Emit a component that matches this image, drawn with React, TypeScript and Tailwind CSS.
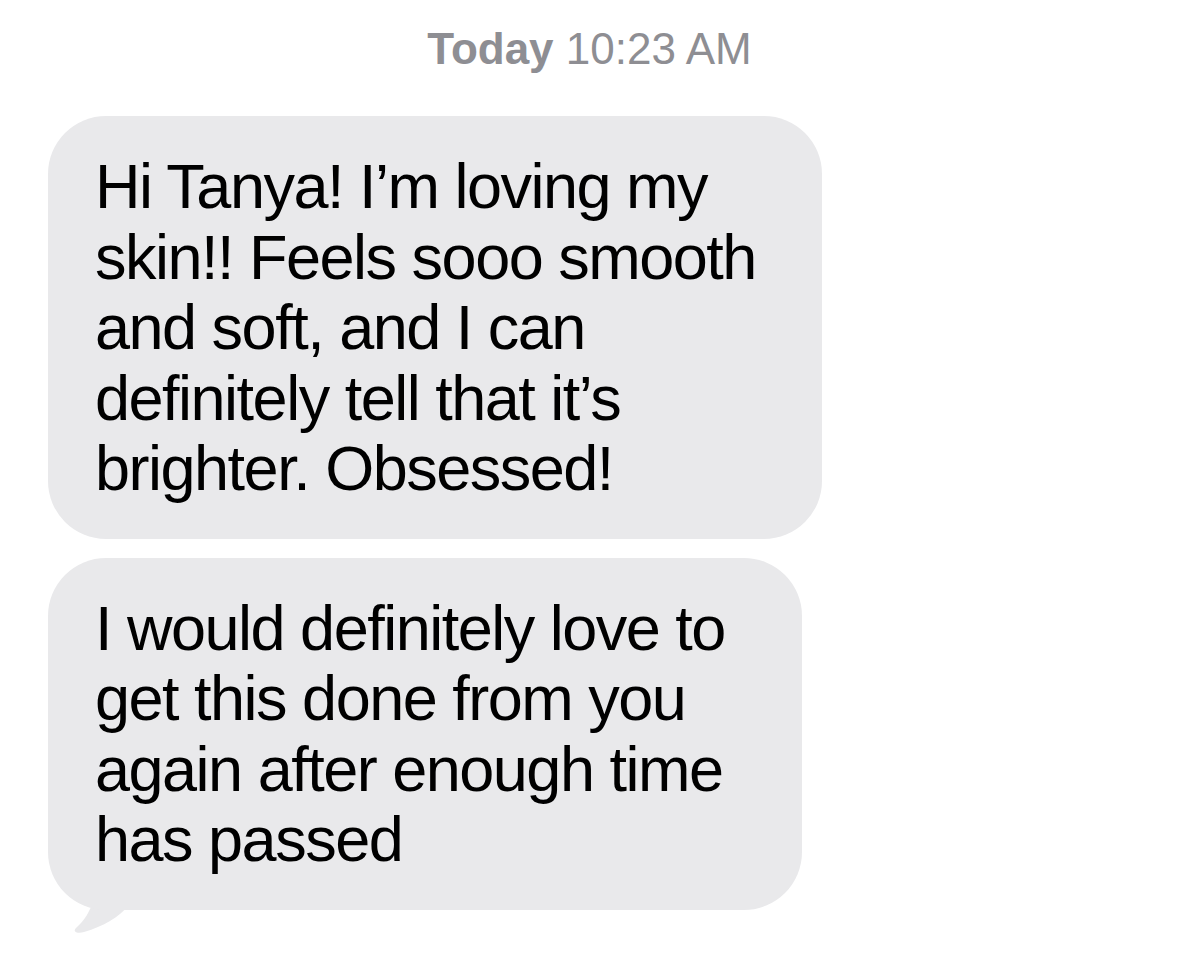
import React from "react";

const first = [
  "Hi Tanya! I\u2019m loving my",
  "skin!! Feels sooo smooth",
  "and soft, and I can",
  "definitely tell that it\u2019s",
  "brighter. Obsessed!",
];

const second = [
  "I would definitely love to",
  "get this done from you",
  "again after enough time",
  "has passed",
];

function Bubble({ lines, width, tail }: { lines: string[]; width: string; tail?: boolean }) {
  return (
    <div className={`relative ${width}`}>
      <div className="relative z-10 rounded-[58px] bg-[#e9e9eb] px-[47px] py-[35px] text-[63px] leading-[70.5px] text-black tracking-[-1.5px]">
        {lines.map((l) => (
          <div key={l} className="whitespace-nowrap">
            {l}
          </div>
        ))}
      </div>
      {tail && (
        <svg
          className="absolute left-[20px] bottom-[-24px]"
          width="80"
          height="70"
          viewBox="0 0 80 70"
        >
          {/* tail curling out to the lower left */}
          <path
            d="M28 0 C28 30 26 48 8 64 C4 68 10 70 16 68 C36 62 50 54 62 40 L70 0 Z"
            fill="#e9e9eb"
          />
        </svg>
      )}
    </div>
  );
}

export default function App() {
  return (
    <div className="w-[1179px] h-[962px] bg-white overflow-hidden font-['Liberation_Sans',Arial,sans-serif]">
      <div className="pt-[22px] text-center text-[44px] leading-[54px] text-[#8e8e93]">
        <span className="font-semibold">Today</span> 10:23 AM
      </div>
      <div className="mt-[40px] pl-[48px] flex flex-col gap-[19px]">
        <Bubble lines={first} width="w-[774px]" />
        <Bubble lines={second} width="w-[754px]" tail />
      </div>
    </div>
  );
}
